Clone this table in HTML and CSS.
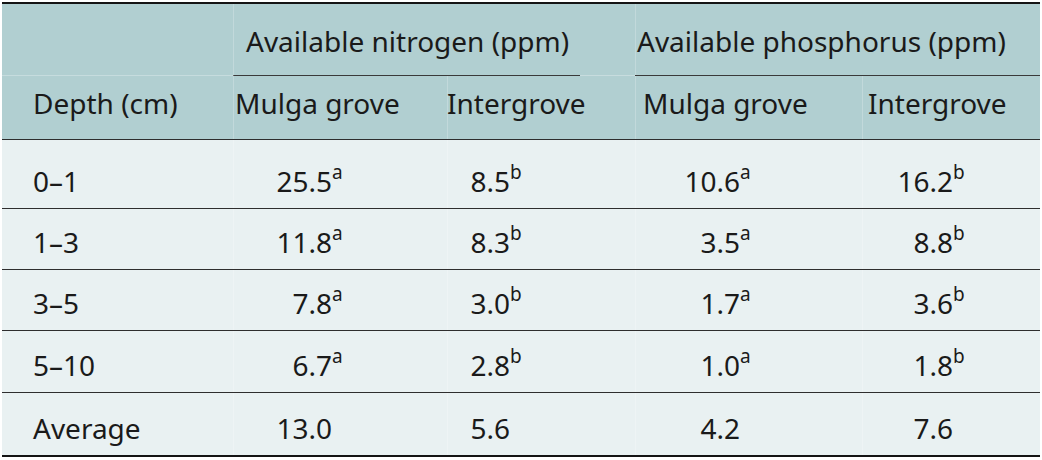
FILE: index.html
```html
<!DOCTYPE html>
<html lang="en">
<head>
<meta charset="utf-8">
<title>Available nitrogen and phosphorus</title>
<link rel="stylesheet" href="styles.css">
</head>
<body>
<div class="table">
  <div class="thead">
    <div class="row head1">
      <div class="cell c-depth"></div>
      <div class="cell group group-n"><span class="gtext">Available nitrogen (ppm)</span></div>
      <div class="cell group group-p"><span class="gtext">Available phosphorus (ppm)</span></div>
    </div>
    <div class="row head2">
      <div class="cell c-depth">Depth (cm)</div>
      <div class="cell h-nm">Mulga grove</div>
      <div class="cell h-ni">Intergrove</div>
      <div class="cell h-pm">Mulga grove</div>
      <div class="cell h-pi">Intergrove</div>
    </div>
  </div>
  <div class="tbody">
    <div class="row data r1">
      <div class="cell c-depth">0–1</div>
      <div class="cell"><span class="val"><span class="num n-nm">25.5</span><sup class="sup">a</sup></span></div>
      <div class="cell"><span class="val"><span class="num n-ni">8.5</span><sup class="sup">b</sup></span></div>
      <div class="cell"><span class="val"><span class="num n-pm">10.6</span><sup class="sup">a</sup></span></div>
      <div class="cell"><span class="val"><span class="num n-pi">16.2</span><sup class="sup">b</sup></span></div>
    </div>
    <div class="row data r2">
      <div class="cell c-depth">1–3</div>
      <div class="cell"><span class="val"><span class="num n-nm">11.8</span><sup class="sup">a</sup></span></div>
      <div class="cell"><span class="val"><span class="num n-ni">8.3</span><sup class="sup">b</sup></span></div>
      <div class="cell"><span class="val"><span class="num n-pm">3.5</span><sup class="sup">a</sup></span></div>
      <div class="cell"><span class="val"><span class="num n-pi">8.8</span><sup class="sup">b</sup></span></div>
    </div>
    <div class="row data r3">
      <div class="cell c-depth">3–5</div>
      <div class="cell"><span class="val"><span class="num n-nm">7.8</span><sup class="sup">a</sup></span></div>
      <div class="cell"><span class="val"><span class="num n-ni">3.0</span><sup class="sup">b</sup></span></div>
      <div class="cell"><span class="val"><span class="num n-pm">1.7</span><sup class="sup">a</sup></span></div>
      <div class="cell"><span class="val"><span class="num n-pi">3.6</span><sup class="sup">b</sup></span></div>
    </div>
    <div class="row data r4">
      <div class="cell c-depth">5–10</div>
      <div class="cell"><span class="val"><span class="num n-nm">6.7</span><sup class="sup">a</sup></span></div>
      <div class="cell"><span class="val"><span class="num n-ni">2.8</span><sup class="sup">b</sup></span></div>
      <div class="cell"><span class="val"><span class="num n-pm">1.0</span><sup class="sup">a</sup></span></div>
      <div class="cell"><span class="val"><span class="num n-pi">1.8</span><sup class="sup">b</sup></span></div>
    </div>
    <div class="row data r5">
      <div class="cell c-depth">Average</div>
      <div class="cell"><span class="val"><span class="num n-nm">13.0</span></span></div>
      <div class="cell"><span class="val"><span class="num n-ni">5.6</span></span></div>
      <div class="cell"><span class="val"><span class="num n-pm">4.2</span></span></div>
      <div class="cell"><span class="val"><span class="num n-pi">7.6</span></span></div>
    </div>
  </div>
</div>
</body>
</html>
```

FILE: styles.css
```css
* { box-sizing: border-box; }

html, body {
  margin: 0;
  padding: 0;
  background: #ffffff;
}

body {
  padding: 2px;
  font-family: "Noto Sans", "DejaVu Sans", sans-serif;
  font-size: 28px;
  line-height: 28px;
  color: #1a1a1a;
}

.table {
  width: 1038px;
  border-top: 2px solid #141414;
  border-bottom: 2px solid #141414;
}

.thead {
  background: #b1cfd1;
}

.tbody {
  background: #e9f1f2;
}

.row {
  display: grid;
  grid-template-columns: 231px 214px 188px 227px 178px;
  align-items: end;
}

.cell {
  white-space: nowrap;
  height: 100%;
  display: flex;
  align-items: flex-end;
  box-shadow: inset 1px 0 0 rgba(255, 255, 255, 0.22);
}

.cell:first-child {
  box-shadow: none;
}

.c-depth {
  padding-left: 31px;
}

/* header row 1 */
.head1 {
  height: 72px;
}

.head1 .c-depth {
  border-bottom: 1px solid rgba(255, 255, 255, 0.28);
}

.group {
  grid-column: span 2;
  padding-bottom: 21px;
}

.group-n {
  padding-left: 13px;
  background:
    linear-gradient(#3a3a3a, #3a3a3a) left bottom / 347px 1px no-repeat,
    linear-gradient(rgba(255, 255, 255, 0.28), rgba(255, 255, 255, 0.28)) right bottom / 55px 1px no-repeat;
}

.group-p {
  padding-left: 2px;
  border-bottom: 1px solid #3a3a3a;
  padding-bottom: 20px;
}

/* header row 2 */
.head2 {
  height: 64px;
  border-bottom: 1px solid #2e2e2e;
}

.head2 .cell {
  padding-bottom: 22px;
}

.h-nm { padding-left: 2px; }
.h-ni { padding-left: 0; }
.h-pm { padding-left: 8px; }
.h-pi { padding-left: 6px; }

/* data rows */
.data {
  border-bottom: 1px solid #2e2e2e;
}

.data:last-child {
  border-bottom: none;
}

.data .cell {
  padding-bottom: 13px;
}

.r1 { height: 69px; }
.r2 { height: 61px; }
.r3 { height: 61px; }
.r4 { height: 62px; }
.r5 { height: 62px; }

.val {
  display: inline-block;
  line-height: 28px;
}

.num {
  display: inline-block;
  text-align: right;
}

.n-nm { width: 99px; }
.n-ni { width: 63px; }
.n-pm { width: 105px; }
.n-pi { width: 91px; }

.sup {
  font-size: 19px;
  line-height: 0;
  vertical-align: 13px;
}
```
